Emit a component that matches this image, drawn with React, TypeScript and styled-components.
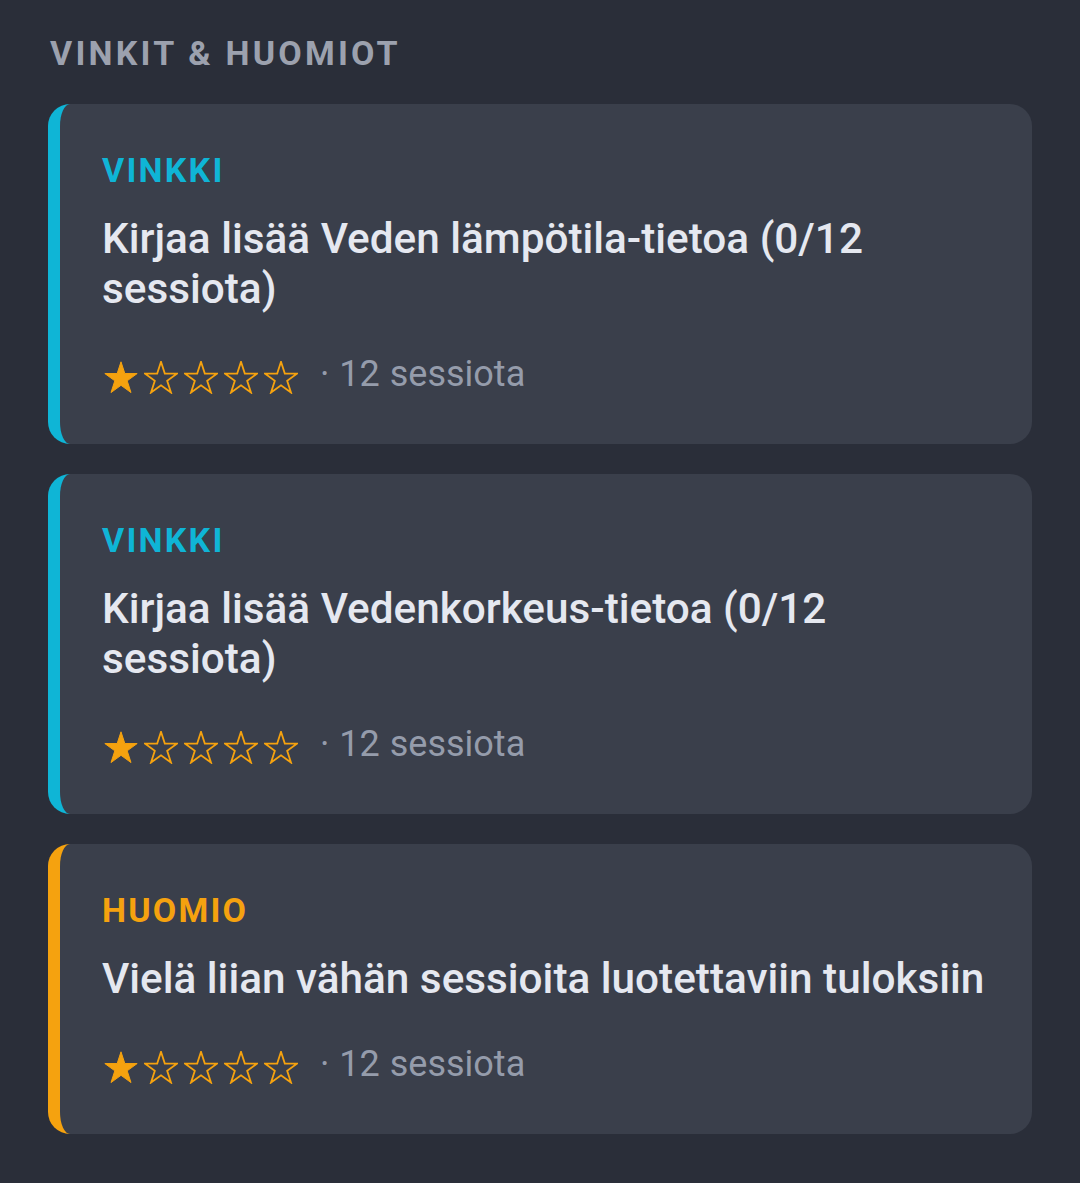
import styled, { createGlobalStyle } from 'styled-components';

const GlobalStyle = createGlobalStyle`
    html, body {
        margin: 0;
        padding: 0;
        background: #2a2e39;
    }
    body {
        font-family: Roboto, "Noto Sans", "DejaVu Sans", sans-serif;
    }
`;

const Page = styled.div`
    min-height: 1183px;
    box-sizing: border-box;
    padding: 33px 48px 40px 48px;
    background: #2a2e39;
`;

const SectionTitle = styled.h2`
    margin: 0 0 31px 2px;
    font-size: 34px;
    line-height: 40px;
    font-weight: 700;
    letter-spacing: 3.2px;
    color: #9ca1ae;
    text-transform: uppercase;
`;

const List = styled.div`
    display: flex;
    flex-direction: column;
    gap: 30px;
`;

const Card = styled.div<{ $accent: string }>`
    background: #3a3f4b;
    border-left: 12px solid ${(p) => p.$accent};
    border-radius: 22px;
    padding: 46px 36px 50px 42px;
`;

const Kind = styled.div<{ $accent: string }>`
    font-size: 34px;
    line-height: 40px;
    font-weight: 700;
    letter-spacing: 2.2px;
    color: ${(p) => p.$accent};
`;

const Message = styled.div`
    margin-top: 24px;
    font-size: 42.3px;
    line-height: 50px;
    font-weight: 500;
    color: #e5e8f0;
`;

const Meta = styled.div`
    margin-top: 40px;
    display: flex;
    align-items: center;
    height: 40px;
`;

const Stars = styled.div`
    display: flex;
    gap: 6px;
    margin: 6px 0 0 2px;
`;

const Count = styled.span`
    margin-left: 22px;
    font-size: 36px;
    line-height: 40px;
    word-spacing: 1px;
    color: #959cab;
`;

const starPoints = (() => {
    const cx = 17;
    const cy = 17.8;
    const pts: string[] = [];
    for (let i = 0; i < 10; i++) {
        const r = i % 2 === 0 ? 17 : 6.5;
        const a = (-90 + i * 36) * Math.PI / 180;
        pts.push(`${(cx + r * Math.cos(a)).toFixed(2)},${(cy + r * Math.sin(a)).toFixed(2)}`);
    }
    return pts.join(' ');
})();

function Star({ filled }: { filled: boolean }) {
    return (
        <svg width="34" height="33" viewBox="0 0 34 33">
            <polygon
                points={starPoints}
                fill={filled ? '#f5a20f' : 'none'}
                stroke="#f5a20f"
                strokeWidth={filled ? 1 : 1.8}
                strokeLinejoin="miter"
            />
        </svg>
    );
}

const tips = [
    { kind: 'VINKKI', accent: '#0fb5d6', text: 'Kirjaa lisää Veden lämpötila-tietoa (0/12 sessiota)', rating: 1, sessions: 12 },
    { kind: 'VINKKI', accent: '#0fb5d6', text: 'Kirjaa lisää Vedenkorkeus-tietoa (0/12 sessiota)', rating: 1, sessions: 12 },
    { kind: 'HUOMIO', accent: '#f5a20f', text: 'Vielä liian vähän sessioita luotettaviin tuloksiin', rating: 1, sessions: 12 },
];

export default function App() {
    return (
        <>
            <GlobalStyle />
            <Page>
                <SectionTitle>Vinkit &amp; huomiot</SectionTitle>
                <List>
                    {tips.map((tip, index) => (
                        <Card key={index} $accent={tip.accent}>
                            <Kind $accent={tip.accent}>{tip.kind}</Kind>
                            <Message>{tip.text}</Message>
                            <Meta>
                                <Stars>
                                    {[0, 1, 2, 3, 4].map((i) => (
                                        <Star key={i} filled={i < tip.rating} />
                                    ))}
                                </Stars>
                                <Count>· {tip.sessions} sessiota</Count>
                            </Meta>
                        </Card>
                    ))}
                </List>
            </Page>
        </>
    );
}
